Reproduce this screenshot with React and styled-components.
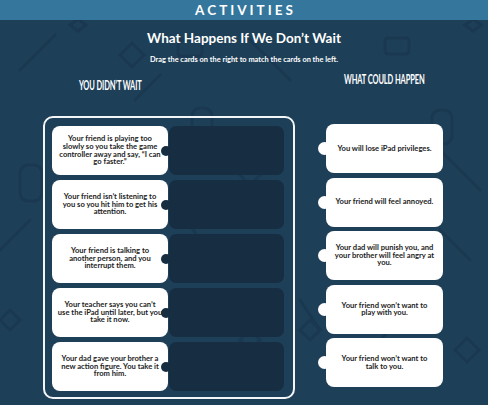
import React from "react";
import styled, { createGlobalStyle } from "styled-components";

const GlobalStyle = createGlobalStyle`
  html, body {
    margin: 0;
    padding: 0;
    background: #1e3f58;
  }
  body {
    font-family: "Lato", "Noto Sans", sans-serif;
    width: 488px;
    height: 405px;
    overflow: hidden;
  }
  *, *::before, *::after {
    box-sizing: border-box;
  }
`;

const Page = styled.div`
  position: relative;
  width: 488px;
  height: 405px;
  overflow: hidden;
`;

const Pattern = styled.svg`
  position: absolute;
  inset: 0;
  z-index: 0;
  pointer-events: none;
`;

const Content = styled.div`
  position: relative;
  z-index: 1;
`;

const TopBar = styled.header`
  height: 20px;
  background: #35769c;
  display: flex;
  align-items: center;
  justify-content: center;
  color: #fff;
  font-weight: 700;
  font-size: 13.5px;
  letter-spacing: 3px;
  padding-left: 3px;
`;

const Title = styled.h1`
  margin: 9px 0 0;
  text-align: center;
  color: #fff;
  font-size: 13.5px;
  font-weight: 700;
  line-height: 18px;
`;

const Hint = styled.p`
  margin: 8px 0 0;
  text-align: center;
  color: #fff;
  font-size: 7.4px;
  font-weight: 700;
  line-height: 10px;
`;

const Board = styled.div`
  display: flex;
  align-items: flex-start;
  padding-left: 43px;
  gap: 31px;
`;

const Column = styled.section`
  display: flex;
  flex-direction: column;
`;

const Heading = styled.h2`
  margin: ${p => p.$top}px 0 0 ${p => p.$offset}px;
  width: ${p => p.$width}px;
  display: flex;
  justify-content: center;
  color: #fff;
  font-size: 12.5px;
  font-weight: 700;
  line-height: 12px;
  white-space: nowrap;
  letter-spacing: -0.2px;

  span {
    display: inline-block;
    transform: scaleX(0.6);
  }
`;

const Frame = styled.div`
  margin-top: ${p => p.$top}px;
  width: 252px;
  border: 2px solid #f2f6f8;
  border-radius: 10px;
  padding: 8px 9px 6px 7px;
  display: flex;
  flex-direction: column;
  gap: 5px;
`;

const Pair = styled.div`
  display: flex;
  gap: 1px;
`;

const Card = styled.div`
  position: relative;
  width: ${p => p.$width}px;
  height: 49px;
  background: #fff;
  border-radius: 8px;
  display: flex;
  align-items: center;
  justify-content: center;
  text-align: center;
  white-space: pre-line;
  color: #222;
  font-size: 7.6px;
  font-weight: 700;
  line-height: 7.6px;
  padding: 0 4px;
`;

const PromptCard = styled(Card)`
  &::after {
    content: "";
    position: absolute;
    right: -3px;
    top: 50%;
    width: 10px;
    height: 10px;
    margin-top: -5px;
    border-radius: 50%;
    background: #172e42;
  }
`;

const AnswerCard = styled(Card)`
  &::before {
    content: "";
    position: absolute;
    left: -8px;
    top: 50%;
    width: 13px;
    height: 13px;
    margin-top: -6.5px;
    border-radius: 50%;
    background: #fff;
  }
`;

const Slot = styled.div`
  width: 115px;
  height: 49px;
  border-radius: 7px;
  background: #172e42;
`;

const AnswerList = styled.div`
  margin-top: 38px;
  display: flex;
  flex-direction: column;
  gap: 4.6px;
`;

const prompts = [
  "Your friend is playing too\nslowly so you take the game\ncontroller away and say, \u201cI can\ngo faster.\u201d",
  "Your friend isn\u2019t listening to\nyou so you hit him to get his\nattention.",
  "Your friend is talking to\nanother person, and you\ninterrupt them.",
  "Your teacher says you can\u2019t\nuse the iPad until later, but you\ntake it now.",
  "Your dad gave your brother a\nnew action figure. You take it\nfrom him."
];

const answers = [
  "You will lose iPad privileges.",
  "Your friend will feel annoyed.",
  "Your dad will punish you, and\nyour brother will feel angry at\nyou.",
  "Your friend won\u2019t want to\nplay with you.",
  "Your friend won\u2019t want to\ntalk to you."
];

// faint doodles scattered behind the board
const Doodles = () => (
  <Pattern width="488" height="405" viewBox="0 0 488 405">
    <g fill="none" stroke="#1a3850" strokeWidth="3" strokeLinecap="round">
      <path d="M20 70 L55 35" />
      <path d="M250 40 L290 80" />
      <path d="M135 100 L160 75" />
      <path d="M440 150 L480 190" />
      <path d="M380 340 L420 300" />
      <path d="M0 250 L30 220" />
      <path d="M180 210 L200 240" />
      <path d="M440 230 L470 260" />
      <path d="M300 300 L320 330" />
      <rect x="178" y="40" width="24" height="16" rx="3" />
      <rect x="385" y="38" width="24" height="16" rx="3" />
      <rect x="20" y="165" width="22" height="36" rx="8" />
      <rect x="192" y="108" width="20" height="34" rx="8" />
      <rect x="140" y="300" width="20" height="34" rx="8" />
      <rect x="432" y="110" width="20" height="34" rx="8" />
      <path d="M70 25 l8 -6 l8 6 l-8 6z" />
      <path d="M465 25 l8 -6 l8 6 l-8 6z" />
      <path d="M240 175 l10 -10 l10 10 l-10 10z" />
      <path d="M240 340 l10 -10 l10 10 l-10 10z" />
      <path d="M300 330 l10 -10 l10 10 l-10 10z" />
      <path d="M0 320 l10 -10 l10 10 l-10 10z" />
      <path d="M455 350 l12 -12 l12 12 l-12 12z" />
      <path d="M120 55 l12 -12 l12 12 l-12 12z" />
    </g>
  </Pattern>
);

export default function App() {
  return (
    <Page>
      <GlobalStyle />
      <Doodles />
      <Content>
        <TopBar>ACTIVITIES</TopBar>
        <Title>What Happens If We Don&rsquo;t Wait</Title>
        <Hint>Drag the cards on the right to match the cards on the left.</Hint>
        <Board>
          <Column>
            <Heading $top={15} $width={116} $offset={9}>
              <span>YOU DIDN&rsquo;T WAIT</span>
            </Heading>
            <Frame $top={24}>
              {prompts.map(text => (
                <Pair key={text}>
                  <PromptCard $width={116}>{text}</PromptCard>
                  <Slot />
                </Pair>
              ))}
            </Frame>
          </Column>
          <Column>
            <Heading $top={9} $width={117} $offset={0}>
              <span>WHAT COULD HAPPEN</span>
            </Heading>
            <AnswerList>
              {answers.map(text => (
                <AnswerCard key={text} $width={117}>
                  {text}
                </AnswerCard>
              ))}
            </AnswerList>
          </Column>
        </Board>
      </Content>
    </Page>
  );
}
